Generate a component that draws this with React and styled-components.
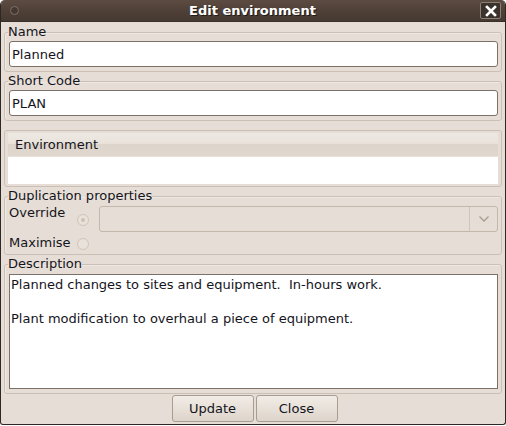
import React from 'react';
import styled, { createGlobalStyle } from 'styled-components';

const Global = createGlobalStyle`
  html, body {
    margin: 0;
    padding: 0;
    background: #ffffff;
  }
  * {
    box-sizing: border-box;
  }
`;

function App() {
  return (
    <>
      <Global />
      <Window>
        <TitleBar>
          <MenuDot />
          <Title>Edit environment</Title>
          <CloseBox>
            <svg width="12" height="12" viewBox="0 0 12 12">
              <path d="M2 2 L10 10 M10 2 L2 10" stroke="#ffffff" strokeWidth="2.6" strokeLinecap="square" />
            </svg>
          </CloseBox>
        </TitleBar>
        <Body>
          <Group>
            <Legend>Name</Legend>
            <TextInput defaultValue="Planned" />
          </Group>
          <Group>
            <Legend>Short Code</Legend>
            <TextInput defaultValue="PLAN" />
          </Group>
          <TableBox>
            <TableHeader>Environment</TableHeader>
            <TableBody />
          </TableBox>
          <Group>
            <Legend>Duplication properties</Legend>
            <OptionGrid>
              <OptionLabel>Override</OptionLabel>
              <Radio checked />
              <Combo>
                <ComboArrow>
                  <svg width="12" height="8" viewBox="0 0 12 8">
                    <path d="M1.5 1.5 L6 6 L10.5 1.5" fill="none" stroke="#a89c90" strokeWidth="1.3" />
                  </svg>
                </ComboArrow>
              </Combo>
              <OptionLabel short>Maximise</OptionLabel>
              <Radio />
            </OptionGrid>
          </Group>
          <Group>
            <Legend>Description</Legend>
            <TextArea>
              <p>Planned changes to sites and equipment.&nbsp; In-hours work.</p>
              <p>&nbsp;</p>
              <p>Plant modification to overhaul a piece of equipment.</p>
            </TextArea>
          </Group>
          <ButtonRow>
            <Button>Update</Button>
            <Button>Close</Button>
          </ButtonRow>
        </Body>
      </Window>
    </>
  );
}

const Window = styled.div`
  width: 506px;
  height: 425px;
  display: flex;
  flex-direction: column;
  background: #e6ded6;
  border: 1px solid #2e2824;
  border-top: none;
  border-radius: 5px 5px 3px 3px;
  overflow: hidden;
  font-family: 'DejaVu Sans', 'Liberation Sans', sans-serif;
  font-size: 13px;
  color: #14141c;
`;

const TitleBar = styled.div`
  height: 22px;
  flex: none;
  display: flex;
  align-items: center;
  padding: 0 4px 0 9px;
  background: linear-gradient(#5c4b41, #4d3f36 60%, #463931);
  border-bottom: 1px solid #3a2f29;
`;

const MenuDot = styled.div`
  width: 9px;
  height: 9px;
  border-radius: 50%;
  border: 1px solid #7b7069;
  background: #453831;
`;

const Title = styled.div`
  flex: 1;
  text-align: center;
  color: #ffffff;
  font-weight: bold;
  font-size: 13px;
  text-shadow: 1px 1px 0 #221a15;
  margin-left: 6px;
`;

const CloseBox = styled.div`
  width: 21px;
  height: 17px;
  display: flex;
  align-items: center;
  justify-content: center;
  background: #3b322c;
  border: 1px solid #8c8077;
  border-radius: 2px;
`;

const Body = styled.div`
  flex: 1;
  display: flex;
  flex-direction: column;
  gap: 1px;
  padding: 2px 3px 0 3px;
`;

const Group = styled.fieldset`
  margin: 0;
  padding: 0 3px 4px 4px;
  min-width: 0;
  border: 1px solid #cbc0b5;
  border-radius: 3px;
  box-shadow: inset 1px 1px 0 #efe9e3;
  display: flex;
  flex-direction: column;
`;

const Legend = styled.legend`
  padding: 0 0 2px 0;
  margin-left: -1px;
  line-height: 15px;
  font-size: 13px;
`;

const TextInput = styled.input`
  height: 26px;
  width: 100%;
  padding: 0 2px;
  border: 1px solid #7d7066;
  border-radius: 3px;
  background: #ffffff;
  font-family: 'DejaVu Sans', 'Liberation Sans', sans-serif;
  font-size: 13px;
  color: #14141c;
  outline: none;
`;

const TableBox = styled.div`
  margin-top: 8px;
  height: 57px;
  border: 1px solid #cbc0b5;
  border-radius: 3px;
  padding: 2px 3px 2px 3px;
  display: flex;
  flex-direction: column;
`;

const TableHeader = styled.div`
  height: 24px;
  padding: 4px 7px 0;
  background: linear-gradient(#ede8e2, #e9e3dc 45%, #ddd4cb 50%, #e0d7ce);
  border-bottom: 1px solid #e8e2db;
`;

const TableBody = styled.div`
  flex: 1;
  background: #ffffff;
`;

const OptionGrid = styled.div`
  display: grid;
  grid-template-columns: 62px 12px 1fr;
  grid-template-rows: 27px 18px;
  column-gap: 6px;
  align-items: center;
`;

const OptionLabel = styled.div`
  align-self: ${(p) => (p.short ? 'center' : 'start')};
  line-height: 15px;
  margin-top: ${(p) => (p.short ? '2px' : '0')};
`;

const Radio = styled.div`
  width: 12px;
  height: 12px;
  border-radius: 50%;
  border: 1px solid #cfc5bb;
  background: #e9e2da;
  position: relative;
  margin-top: ${(p) => (p.checked ? '3px' : '6px')};

  &::after {
    content: '';
    display: ${(p) => (p.checked ? 'block' : 'none')};
    position: absolute;
    left: 3px;
    top: 3px;
    width: 4px;
    height: 4px;
    border-radius: 50%;
    background: #cbc1b7;
  }
`;

const Combo = styled.div`
  margin-left: 4px;
  height: 26px;
  border: 1px solid #c4b8ac;
  border-radius: 3px;
  background: #e6ded6;
  display: flex;
  justify-content: flex-end;
`;

const ComboArrow = styled.div`
  width: 28px;
  border-left: 1px solid #cfc5bb;
  display: flex;
  align-items: center;
  justify-content: center;
`;

const TextArea = styled.div`
  height: 115px;
  margin-top: 1px;
  border: 1px solid #7d7066;
  background: #ffffff;
  padding: 1px 1px;
  line-height: 17px;

  p {
    margin: 0;
  }
`;

const ButtonRow = styled.div`
  display: flex;
  justify-content: center;
  gap: 2px;
  padding-left: 3px;
`;

const Button = styled.button`
  width: 82px;
  height: 27px;
  border: 1px solid #a99c90;
  border-radius: 3px;
  background: linear-gradient(#f1ece6, #e8e1d9 50%, #ddd4cb);
  font-family: 'DejaVu Sans', 'Liberation Sans', sans-serif;
  font-size: 13px;
  color: #14141c;
  padding: 0;
`;

export default App;
